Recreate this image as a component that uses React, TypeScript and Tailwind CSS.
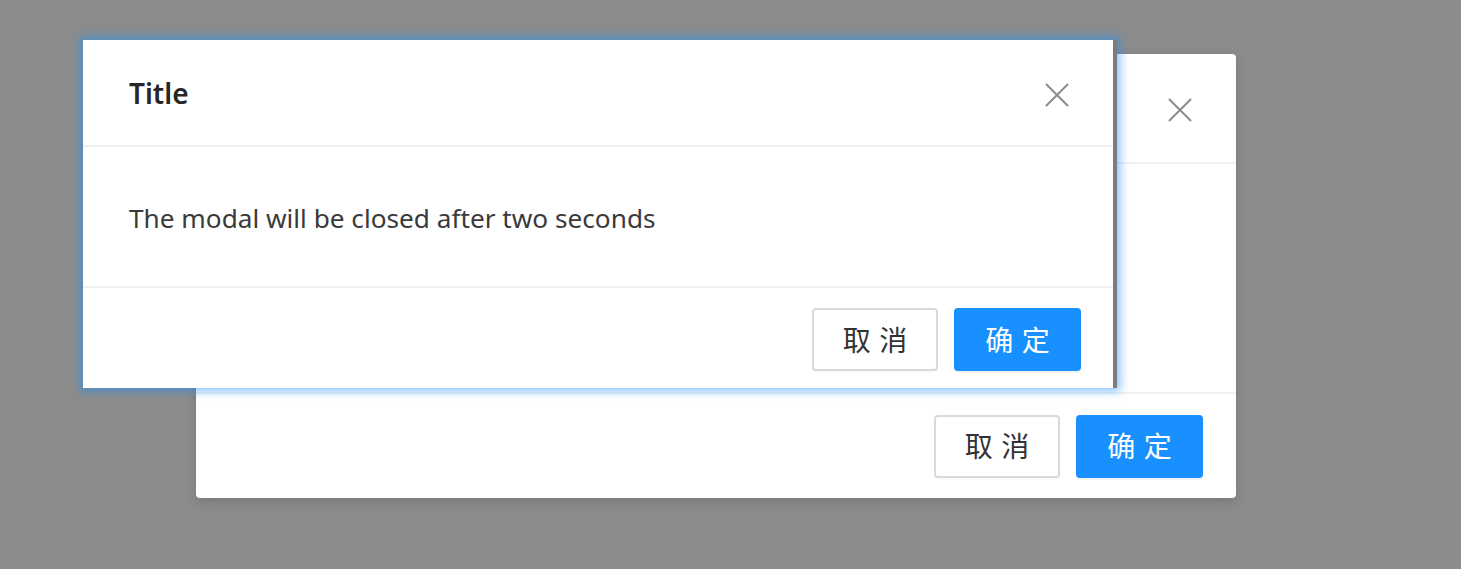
import React from "react";

const font = { fontFamily: '"Noto Sans", "Open Sans", "Noto Sans CJK SC", sans-serif' };

function CloseIcon() {
  return (
    <svg width="24" height="24" viewBox="0 0 24 24" fill="none" className="mt-1">
      <path d="M1.5 1.5L22.5 22.5M22.5 1.5L1.5 22.5" stroke="#8c8c8c" strokeWidth="2" strokeLinecap="round" />
    </svg>
  );
}

function Footer() {
  return (
    <div className="flex h-full items-center justify-end gap-4 pr-8">
      <button className="flex h-[63px] w-[126px] items-center justify-center rounded-[4px] border-2 border-[#d9d9d9] bg-white text-[28px] text-[#333] shadow-[0_2px_0_rgba(0,0,0,0.02)]">
        <span className="tracking-[0.3em] -mr-[0.3em]">取消</span>
      </button>
      <button className="flex h-[63px] w-[127px] items-center justify-center rounded-[4px] bg-[#1890ff] text-[28px] text-white shadow-[0_2px_0_rgba(0,0,0,0.045)]">
        <span className="tracking-[0.3em] -mr-[0.3em]">确定</span>
      </button>
    </div>
  );
}

export default function App() {
  return (
    <div className="relative h-[569px] w-full overflow-hidden bg-[#8c8c8c]" style={font}>
      {/* back modal */}
      <div className="absolute left-[196px] top-[54px] flex w-[1040px] flex-col rounded-[4px] bg-white shadow-[0_4px_12px_rgba(0,0,0,0.15)]">
        <div className="flex h-[110px] items-center justify-end border-b-2 border-[#f0f0f0] pr-[44px]">
          <CloseIcon />
        </div>
        <div className="h-[230px] border-b-2 border-[#f0f0f0]" />
        <div className="h-[104px] pr-[1px]">
          <Footer />
        </div>
      </div>

      {/* front modal */}
      <div className="absolute left-[83px] top-[40px] flex w-[1034px] flex-col border-r-4 border-[#7d7d7d] bg-white shadow-[0_0_9px_3px_rgba(24,144,255,0.55)]">
        <div className="flex h-[107px] items-center justify-between border-b-2 border-[#f0f0f0] pl-[46px] pr-[44px]">
          <span className="text-[28px] font-semibold text-[#262626]">Title</span>
          <CloseIcon />
        </div>
        <div className="flex h-[141px] items-center border-b-2 border-[#f0f0f0] pl-[46px] pt-1">
          <span className="text-[26.2px] text-[#3a3a3a]">The modal will be closed after two seconds</span>
        </div>
        <div className="h-[100px] pt-[3px]">
          <Footer />
        </div>
      </div>
    </div>
  );
}
